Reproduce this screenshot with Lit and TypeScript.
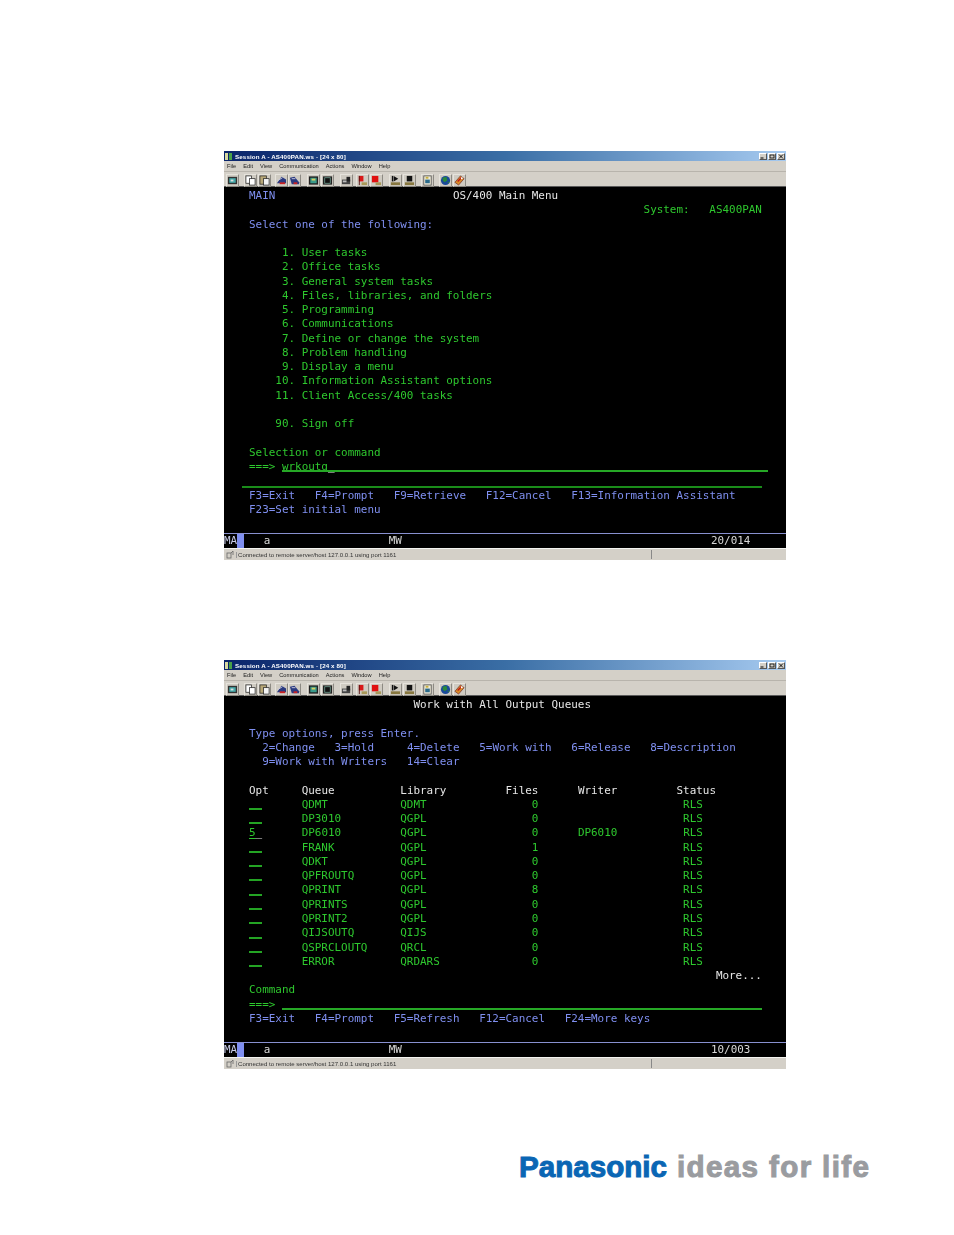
import { LitElement, html, css, svg } from "lit";
import { customElement, property } from "lit/decorators.js";

type Seg = [number, string, string?];
type Row = Seg[];
const B = "b", G = "g", W = "w";

function rowOf(segs: Row, start = 0) {
  let col = start;
  return segs.map(([c, t, k]) => {
    const gap = " ".repeat(Math.max(0, c - col));
    col = c + t.length;
    return html`${gap}<span class=${k ?? G}>${t}</span>`;
  });
}

const menuRows: Row[] = [
  [[3, "MAIN", B], [34, "OS/400 Main Menu", W]],
  [[63, "System:", G], [73, "AS400PAN", G]],
  [[3, "Select one of the following:", B]],
  [],
  ...[
    "1. User tasks", "2. Office tasks", "3. General system tasks", "4. Files, libraries, and folders",
    "5. Programming", "6. Communications", "7. Define or change the system", "8. Problem handling",
    "9. Display a menu",
  ].map((t) => [[8, t, G]] as Row),
  [[7, "10. Information Assistant options", G]],
  [[7, "11. Client Access/400 tasks", G]],
  [],
  [[7, "90. Sign off", G]],
  [],
  [[3, "Selection or command", G]],
];
const menuKeys: Row[] = [
  [[3, "F3=Exit", B], [13, "F4=Prompt", B], [25, "F9=Retrieve", B], [39, "F12=Cancel", B], [52, "F13=Information Assistant", B]],
  [[3, "F23=Set initial menu", B]],
];

const queues: [string, string, string, string][] = [
  ["QDMT", "QDMT", "0", ""], ["DP3010", "QGPL", "0", ""], ["DP6010", "QGPL", "0", "DP6010"],
  ["FRANK", "QGPL", "1", ""], ["QDKT", "QGPL", "0", ""], ["QPFROUTQ", "QGPL", "0", ""],
  ["QPRINT", "QGPL", "8", ""], ["QPRINTS", "QGPL", "0", ""], ["QPRINT2", "QGPL", "0", ""],
  ["QIJSOUTQ", "QIJS", "0", ""], ["QSPRCLOUTQ", "QRCL", "0", ""], ["ERROR", "QRDARS", "0", ""],
];

const icons = [
  { g: 0, i: svg`<rect x="1" y="2" width="10" height="8" fill="#333"/><rect x="2.5" y="3.5" width="7" height="5" fill="#4aa"/><rect x="4" y="5" width="3" height="2" fill="#ddd"/>` },
  { g: 5, i: svg`<rect x="1" y="1" width="6" height="8" fill="#fff" stroke="#222" stroke-width=".8"/><rect x="5" y="4" width="6" height="7" fill="#fff" stroke="#222" stroke-width=".8"/>` },
  { g: 1, i: svg`<rect x="1" y="1" width="7" height="9" fill="#b8a878" stroke="#222" stroke-width=".8"/><rect x="5" y="4" width="6" height="7" fill="#f4f4f4" stroke="#222" stroke-width=".8"/>` },
  { g: 4, i: svg`<path d="M1 9 L6 2 L11 5 L11 9 Z" fill="#2a3a80"/><path d="M4 9 H10" stroke="#c22" stroke-width="2"/><path d="M2 6 L7 3" stroke="#ccd" stroke-width="1"/>` },
  { g: 0, i: svg`<path d="M1 3 L6 2 L11 8 L11 10 L3 10 Z" fill="#2a3a80"/><path d="M5 9 H9" stroke="#c22" stroke-width="2"/><path d="M3 4 L7 4" stroke="#ccd" stroke-width="1"/>` },
  { g: 6, i: svg`<rect x="1" y="1.5" width="10" height="9" fill="#222"/><rect x="2.5" y="3" width="7" height="6" fill="#3a9a8a"/><rect x="4" y="4" width="4" height="2" fill="#d8d060"/>` },
  { g: 1, i: svg`<rect x="1" y="1.5" width="10" height="9" fill="#222"/><rect x="3" y="3" width="6" height="6" fill="#111" stroke="#7a9" stroke-width=".8"/>` },
  { g: 6, i: svg`<rect x="1" y="5" width="9" height="5" fill="#444"/><rect x="6" y="2" width="4" height="5" fill="#222"/><rect x="2" y="6" width="4" height="2" fill="#bbb"/>` },
  { g: 3, i: svg`<rect x="2" y="1" width="5" height="6" fill="#d81818"/><rect x="2" y="1" width="1" height="10" fill="#511"/><rect x="5" y="8" width="6" height="3" fill="#a89858"/>` },
  { g: 1, i: svg`<rect x="1" y="1" width="7" height="7" fill="#e01010"/><rect x="5" y="8" width="6" height="3" fill="#a89858"/>` },
  { g: 6, i: svg`<path d="M4 1 L9 4 L4 7 Z" fill="#111"/><rect x="2" y="1" width="1.5" height="6" fill="#111"/><rect x="1" y="8" width="10" height="3" fill="#887840"/>` },
  { g: 1, i: svg`<rect x="3" y="1" width="6" height="6" fill="#111"/><rect x="1" y="8" width="10" height="3" fill="#887840"/>` },
  { g: 5, i: svg`<rect x="2" y="1" width="8" height="10" fill="#f0ecd8" stroke="#444" stroke-width=".8"/><rect x="3.5" y="5" width="5" height="4" fill="#2a6a8a"/><rect x="4" y="2" width="3" height="2" fill="#c8b040"/>` },
  { g: 5, i: svg`<circle cx="6" cy="6" r="5" fill="#1a4a9a"/><path d="M3 3 L7 2 L8 6 L5 8 L3 6 Z" fill="#2a8a3a"/><path d="M8 8 L10 7 L10 9 Z" fill="#2a8a3a"/>` },
  { g: 1, i: svg`<path d="M1 8 L7 1 L11 4 L5 11 Z" fill="#d88a28" stroke="#622" stroke-width=".7"/><path d="M4 7 L8 3" stroke="#c01818" stroke-width="1.5"/><circle cx="8.5" cy="3.5" r="1" fill="#fff"/>` },
];

@customElement("term-window")
class TermWindow extends LitElement {
  @property({ type: Number }) variant = 0;

  static styles = css`
    :host { display: block; }
    .win { width: 562px; background: #d4d0c8; filter: blur(0.4px); font-family: "Liberation Sans", sans-serif; }
    .title { height: 10px; display: flex; align-items: center; background: linear-gradient(90deg, #0a246a 0%, #3a6ea5 50%, #a6caf0 100%); color: #fff; font-size: 6.2px; font-weight: 700; padding: 0 1px; box-sizing: border-box; }
    .appicon { width: 7px; height: 7px; margin-right: 3px; background: linear-gradient(90deg, #d8d8a0 0 40%, #0a246a 40% 55%, #48a048 55%); flex: none; }
    .title span { flex: 1; letter-spacing: .02em; white-space: nowrap; }
    .wb { display: flex; flex: none; }
    .wb i { width: 8px; height: 7px; margin-left: 1px; background: #d4d0c8; border: 1px solid; border-color: #fff #555 #555 #fff; box-sizing: border-box; display: block; }
    .wb svg { display: block; width: 6px; height: 5px; }
    .menu { height: 11px; display: flex; align-items: center; color: #222; font-size: 5.7px; box-sizing: border-box; border-bottom: 1px solid #b8b4ac; padding-left: 3px; }
    .menu span { white-space: nowrap; }
    .tools { height: 15px; display: flex; align-items: center; padding: 2px 0 0 2px; box-sizing: border-box; border-bottom: 1px solid #5a5a5a; }
    .tb { flex: none; height: 11px; width: 11px; background: #cfcbc2; border: 1px solid; border-color: #e6e3dc #8d8a83 #8d8a83 #e6e3dc; }
    .tb svg { display: block; width: 11px; height: 11px; }
    .screen { background: #000; height: 346px; box-sizing: border-box; padding-top: 2px; font-family: "DejaVu Sans Mono", monospace; font-size: 10.93px; overflow: hidden; }
    .row { height: 14.28px; line-height: 14.28px; white-space: pre; padding-left: 5.3px; position: relative; }
    .b { color: #7f8ff0; }
    .g { color: #2ec82e; }
    .w { color: #e6e6e6; }
    .uline { text-decoration: underline; text-underline-offset: 2px; }
    .cur { color: #fff; }
    .sep { position: absolute; left: 18px; width: 520px; bottom: 1px; height: 2px; background: #1a8c1a; }
    .inp { position: absolute; height: 2px; background: #26a826; bottom: 2px; }
    .opt { position: absolute; left: 25px; width: 13px; height: 2px; bottom: 2px; background: #24a424; }
    .status { height: 15px; box-sizing: border-box; background: #000; border-top: 1px solid #8890d0; display: flex; font-family: "DejaVu Sans Mono", monospace; font-size: 10.93px; line-height: 14px; white-space: pre; }
    .ma { width: 20px; flex: none; background: linear-gradient(90deg, #000 0 65%, #7f8ff0 65%); color: #c8cce8; }
    .s { color: #d8d8d8; }
    .sbar { height: 12px; display: flex; align-items: center; color: #333; font-size: 6.07px; border-top: 1px solid #f4f4f0; box-sizing: border-box; white-space: nowrap; }
    .ic { width: 12px; flex: none; padding-left: 2px; box-sizing: border-box; }
    .msg { width: 413px; flex: none; border-left: 1px solid #999; padding-left: 1px; }
    .d { width: 1px; height: 9px; background: #888; flex: none; }
  `;

  titlebar() {
    return html`<div class="title"><div class="appicon"></div><span>Session A - AS400PAN.ws - [24 x 80]</span>
      <div class="wb">
        <i><svg viewBox="0 0 6 5"><rect x="0.5" y="3.5" width="3" height="1" fill="#000"/></svg></i>
        <i><svg viewBox="0 0 6 5"><rect x="1" y="1" width="4" height="3" fill="none" stroke="#000" stroke-width=".8"/></svg></i>
        <i><svg viewBox="0 0 6 5"><path d="M1 .5 L5 4.5 M5 .5 L1 4.5" stroke="#000" stroke-width=".9"/></svg></i>
      </div></div>`;
  }

  menubar() {
    const m: [string, number][] = [["File", 0], ["Edit", 7], ["View", 7], ["Communication", 7], ["Actions", 7], ["Window", 7], ["Help", 7]];
    return html`<div class="menu">${m.map(([t, g]) => html`<span style="margin-left:${g}px">${t}</span>`)}</div>`;
  }

  toolbar() {
    return html`<div class="tools">${icons.map((x) => html`<div class="tb" style="margin-left:${x.g}px"><svg viewBox="0 0 12 12">${x.i}</svg></div>`)}</div>`;
  }

  statusbar(pos: string) {
    return html`<div class="status"><div class="ma">MA</div><span class="s">   a${" ".repeat(18)}MW${" ".repeat(47)}${pos}</span></div>
      <div class="sbar"><div class="ic"><svg width="9" height="9" viewBox="0 0 9 9"><rect x="1" y="3" width="4" height="5" fill="none" stroke="#666" stroke-width=".8"/><path d="M5 3 L7 1 M7 1 V5" stroke="#666" stroke-width=".8"/></svg></div>
      <div class="msg">Connected to remote server/host 127.0.0.1 using port 1161</div><div class="d"></div></div>`;
  }

  menuScreen() {
    return html`<div class="screen">
      ${menuRows.map((r) => html`<div class="row">${rowOf(r)}</div>`)}
      <div class="row"><div class="inp" style="left:58px;width:486px"></div><span class="g">   ===> wrkoutq</span><span class="cur">_</span></div>
      <div class="row"><div class="sep"></div></div>
      ${menuKeys.map((r) => html`<div class="row">${rowOf(r)}</div>`)}
    </div>`;
  }

  queueRow(q: string, l: string, f: string, w: string, i: number) {
    const segs: Row = [[11, q, G], [26, l, G], [46, f, G], ...(w ? ([[53, w, G]] as Row) : []), [69, "RLS", G]];
    if (i === 2) {
      return html`<div class="row">   <span class="g uline">5</span><span class="cur">_</span>${rowOf(segs, 5)}</div>`;
    }
    return html`<div class="row"><div class="opt"></div>${rowOf(segs)}</div>`;
  }

  queueScreen() {
    const head: Row = [[3, "Opt", W], [11, "Queue", W], [26, "Library", W], [42, "Files", W], [53, "Writer", W], [68, "Status", W]];
    return html`<div class="screen">
      <div class="row">${rowOf([[28, "Work with All Output Queues", W]])}</div>
      <div class="row"></div>
      <div class="row">${rowOf([[3, "Type options, press Enter.", B]])}</div>
      <div class="row">${rowOf([[5, "2=Change", B], [16, "3=Hold", B], [27, "4=Delete", B], [38, "5=Work with", B], [52, "6=Release", B], [64, "8=Description", B]])}</div>
      <div class="row">${rowOf([[5, "9=Work with Writers", B], [27, "14=Clear", B]])}</div>
      <div class="row"></div>
      <div class="row">${rowOf(head)}</div>
      ${queues.map(([q, l, f, w], i) => this.queueRow(q, l, f, w, i))}
      <div class="row">${rowOf([[74, "More...", W]])}</div>
      <div class="row">${rowOf([[3, "Command", G]])}</div>
      <div class="row">${rowOf([[3, "===>", G]])}<div class="inp" style="left:58px;width:480px"></div></div>
      <div class="row">${rowOf([[3, "F3=Exit", B], [13, "F4=Prompt", B], [25, "F5=Refresh", B], [38, "F12=Cancel", B], [51, "F24=More keys", B]])}</div>
    </div>`;
  }

  render() {
    return html`<div class="win">
      ${this.titlebar()}${this.menubar()}${this.toolbar()}
      ${this.variant === 0 ? this.menuScreen() : this.queueScreen()}
      ${this.statusbar(this.variant === 0 ? "20/014" : "10/003")}
    </div>`;
  }
}

@customElement("app-root")
class AppRoot extends LitElement {
  static styles = css`
    :host { display: block; background: #fff; height: 1235px; overflow: hidden; }
    .page { padding: 151px 0 0 224px; display: flex; flex-direction: column; }
    .second { margin-top: 100px; }
    .logo { margin: 81px 0 0 295px; white-space: nowrap; font-family: "Liberation Sans", sans-serif; font-weight: 700; font-size: 29.6px; line-height: 34px; display: flex; }
    .p { color: #0a66b4; -webkit-text-stroke: 1px #0a66b4; width: 158px; }
    .t { color: #9a9ca0; -webkit-text-stroke: 1px #9a9ca0; letter-spacing: 1.35px; }
  `;
  render() {
    return html`<div class="page">
      <term-window .variant=${0}></term-window>
      <term-window class="second" .variant=${1}></term-window>
      <div class="logo"><span class="p">Panasonic</span><span class="t">ideas for life</span></div>
    </div>`;
  }
}
